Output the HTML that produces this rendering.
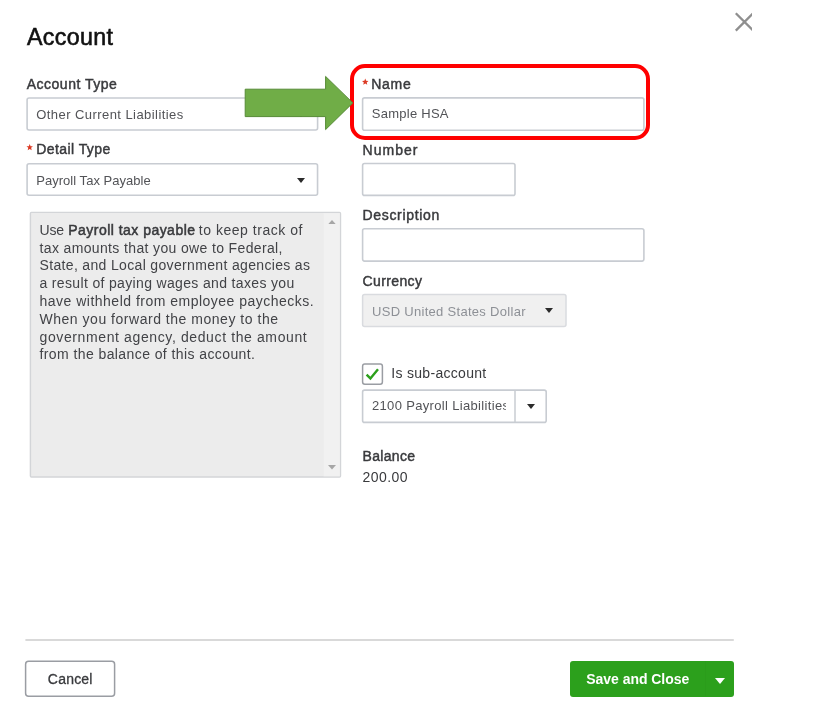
<!DOCTYPE html>
<html><head><meta charset="utf-8"><title>Account</title>
<style>
html,body{margin:0;padding:0;background:#fff;}
body{width:827px;height:727px;position:relative;overflow:hidden;font-family:"Liberation Sans",sans-serif;}
.t{position:absolute;white-space:nowrap;line-height:1;font-family:"Liberation Sans",sans-serif;}
.t b{font-weight:700;}
.abs{position:absolute;}
body{filter:opacity(1);}
</style></head>
<body>

<svg class="abs" style="left:0;top:0" width="827" height="727" viewBox="0 0 827 727">
<rect x="27.1" y="98.0" width="290.50" height="32.00" rx="2" fill="#fff" stroke="#c8ccd2" stroke-width="1.6"/>
<rect x="27.1" y="163.7" width="290.45" height="31.55" rx="2" fill="#fff" stroke="#c8ccd2" stroke-width="1.6"/>
<rect x="30.4" y="212.4" width="310.10" height="264.60" rx="1" fill="#ececec" stroke="#d3d5d8" stroke-width="1.4"/>
<rect x="323.6" y="213.1" width="16.2" height="263.2" fill="#f1f1f1"/>
<rect x="362.6" y="97.9" width="281.30" height="32.40" rx="2" fill="#fff" stroke="#c8ccd2" stroke-width="1.6"/>
<rect x="362.6" y="163.5" width="152.40" height="31.90" rx="2" fill="#fff" stroke="#c8ccd2" stroke-width="1.6"/>
<rect x="362.6" y="228.7" width="281.30" height="32.40" rx="2" fill="#fff" stroke="#c8ccd2" stroke-width="1.6"/>
<rect x="362.6" y="294.5" width="203.40" height="32.00" rx="2" fill="#f0f0f0" stroke="#d9dbdf" stroke-width="1.5"/>
<rect x="362.6" y="364.0" width="19.80" height="20.20" rx="2.2" fill="#fff" stroke="#9a9da3" stroke-width="1.5"/>
<rect x="362.6" y="390.1" width="183.60" height="32.30" rx="2" fill="#fff" stroke="#c8ccd2" stroke-width="1.6"/>
<line x1="515" y1="390.1" x2="515" y2="422.4" stroke="#c8ccd2" stroke-width="1.5"/>
<rect x="25.6" y="661.3" width="89.00" height="34.90" rx="3" fill="#fff" stroke="#9a9da3" stroke-width="1.5"/>
</svg>
<!-- inputs left -->
<svg class="abs" style="left:297px;top:111.7px" width="8" height="5" viewBox="0 0 8 5"><path d="M0 0 H8 L4 5 Z" fill="#2b2b2b"/></svg>
<!-- detail dropdown arrow -->
<svg class="abs" style="left:297px;top:177.5px" width="8" height="5" viewBox="0 0 8 5"><path d="M0 0 H8 L4 5 Z" fill="#2b2b2b"/></svg>
<!-- gray description box -->
<svg class="abs" style="left:327.7px;top:219.8px" width="8" height="4.4" viewBox="0 0 8 4.4"><path d="M0 4.4 L4 0 L8 4.4 Z" fill="#a6a6a6"/></svg>
<svg class="abs" style="left:327.7px;top:465.2px" width="8" height="4.4" viewBox="0 0 8 4.4"><path d="M0 0 H8 L4 4.4 Z" fill="#a6a6a6"/></svg>
<!-- right inputs -->
<svg class="abs" style="left:544.5px;top:308.4px" width="8" height="5" viewBox="0 0 8 5"><path d="M0 0 H8 L4 5 Z" fill="#2b2b2b"/></svg>
<!-- checkbox -->
<svg class="abs" style="left:365px;top:367px" width="15" height="14" viewBox="0 0 15 14"><path d="M1.6 7.6 L5.4 11.4 L13 2.2" fill="none" stroke="#2ca01c" stroke-width="2.4" stroke-linecap="butt" stroke-linejoin="miter"/></svg>
<!-- sub-account combo -->
<svg class="abs" style="left:527px;top:404px" width="8" height="5" viewBox="0 0 8 5"><path d="M0 0 H8 L4 5 Z" fill="#2b2b2b"/></svg>
<!-- clipped combo text -->
<div class="abs" style="left:366px;top:395px;width:140.25px;height:24px;overflow:hidden;"><span class="t" style="left:6px;top:3.8px;font-size:13px;color:#525357;letter-spacing:0.33px;">2100 Payroll Liabilities</span></div>
<!-- red stars -->
<svg class="abs" style="left:0;top:0" width="827" height="200" viewBox="0 0 827 200"><polygon points="29.70,144.00 30.58,146.19 32.93,146.35 31.13,147.86 31.70,150.15 29.70,148.90 27.70,150.15 28.27,147.86 26.47,146.35 28.82,146.19" fill="#dc3a24"/><polygon points="365.25,78.60 366.13,80.79 368.48,80.95 366.68,82.46 367.25,84.75 365.25,83.50 363.25,84.75 363.82,82.46 362.02,80.95 364.37,80.79" fill="#dc3a24"/></svg>
<!-- close X -->
<div class="abs" style="left:730px;top:8px;width:22px;height:28px;overflow:hidden;"><svg class="abs" style="left:0;top:0" width="30" height="28" viewBox="0 0 30 28"><path d="M5.8 5.2 L23.2 22.6 M23.2 5.2 L5.8 22.6" stroke="#8f8f8f" stroke-width="2.3" fill="none"/></svg></div>
<!-- red rounded rect -->
<div class="abs" style="left:350px;top:63.75px;width:300px;height:75.75px;box-sizing:border-box;border:4px solid #ff0000;border-radius:15px;"></div>
<!-- green arrow -->
<svg class="abs" style="left:240px;top:70px" width="120" height="66" viewBox="240 70 120 66"><path d="M245.2 89.2 H325.6 V76.4 L352.8 102.9 L325.6 129.6 V116.6 H245.2 Z" fill="#70ad47" stroke="#568a36" stroke-width="1" stroke-linejoin="miter"/></svg>
<!-- footer -->
<svg class="abs" style="left:0;top:636px" width="827" height="8" viewBox="0 636 827 8"><line x1="25.4" y1="640" x2="733.8" y2="640" stroke="#cdcdcd" stroke-width="1.3"/></svg>
<div class="abs" style="left:569.5px;top:660.75px;width:164.5px;height:35.75px;background:#2ca01c;border-radius:3px;"></div>
<div class="abs" style="left:704.75px;top:660.75px;width:1px;height:35.5px;background:#2b9c1b;"></div>
<svg class="abs" style="left:714.5px;top:678px" width="10" height="6" viewBox="0 0 10 6"><path d="M0 0 H10 L5 6 Z" fill="#ffffff"/></svg>

<span class="t" style="left:26.9px;top:26.16px;font-size:23.2px;font-weight:400;color:#111111;letter-spacing:0.367px;-webkit-text-stroke:0.6px #111111;">Account</span>
<span class="t" style="left:26.75px;top:77.15px;font-size:14px;font-weight:400;color:#393a3d;letter-spacing:0.493px;-webkit-text-stroke:0.45px #393a3d;">Account Type</span>
<span class="t" style="left:36.25px;top:108.00px;font-size:13px;font-weight:400;color:#525357;letter-spacing:0.435px;">Other Current Liabilities</span>
<span class="t" style="left:36.25px;top:142.25px;font-size:14px;font-weight:400;color:#393a3d;letter-spacing:0.422px;-webkit-text-stroke:0.45px #393a3d;">Detail Type</span>
<span class="t" style="left:36.25px;top:173.50px;font-size:13px;font-weight:400;color:#525357;letter-spacing:0.031px;">Payroll Tax Payable</span>
<span class="t" style="left:371.3px;top:76.75px;font-size:14px;font-weight:400;color:#393a3d;letter-spacing:0.714px;-webkit-text-stroke:0.45px #393a3d;">Name</span>
<span class="t" style="left:371.75px;top:107.25px;font-size:13px;font-weight:400;color:#525357;letter-spacing:0.259px;">Sample HSA</span>
<span class="t" style="left:362.5px;top:142.65px;font-size:14px;font-weight:400;color:#393a3d;letter-spacing:1.041px;-webkit-text-stroke:0.45px #393a3d;">Number</span>
<span class="t" style="left:362.5px;top:207.90px;font-size:14px;font-weight:400;color:#393a3d;letter-spacing:0.672px;-webkit-text-stroke:0.45px #393a3d;">Description</span>
<span class="t" style="left:362.5px;top:273.90px;font-size:14px;font-weight:400;color:#393a3d;letter-spacing:0.386px;-webkit-text-stroke:0.45px #393a3d;">Currency</span>
<span class="t" style="left:372px;top:305.00px;font-size:13px;font-weight:400;color:#8d9096;letter-spacing:0.297px;">USD United States Dollar</span>
<span class="t" style="left:391.25px;top:366.05px;font-size:14px;font-weight:400;color:#393a3d;letter-spacing:0.303px;">Is sub-account</span>
<span class="t" style="left:362.5px;top:448.55px;font-size:14px;font-weight:400;color:#393a3d;letter-spacing:0.318px;-webkit-text-stroke:0.45px #393a3d;">Balance</span>
<span class="t" style="left:362.5px;top:470.15px;font-size:14px;font-weight:400;color:#393a3d;letter-spacing:0.434px;">200.00</span>
<span class="t" style="left:47.8px;top:671.95px;font-size:14px;font-weight:400;color:#393a3d;letter-spacing:0.221px;-webkit-text-stroke:0.3px #393a3d;">Cancel</span>
<span class="t" style="left:586.25px;top:672.40px;font-size:14px;font-weight:700;color:#ffffff;letter-spacing:-0.038px;">Save and Close</span>
<span class="t" style="left:39.5px;top:240.64px;font-size:14px;font-weight:400;color:#424347;letter-spacing:0.361px;">tax amounts that you owe to Federal,</span>
<span class="t" style="left:39.5px;top:258.43px;font-size:14px;font-weight:400;color:#424347;letter-spacing:0.339px;">State, and Local government agencies as</span>
<span class="t" style="left:39.5px;top:276.22px;font-size:14px;font-weight:400;color:#424347;letter-spacing:0.343px;">a result of paying wages and taxes you</span>
<span class="t" style="left:39.5px;top:294.01px;font-size:14px;font-weight:400;color:#424347;letter-spacing:0.492px;">have withheld from employee paychecks.</span>
<span class="t" style="left:39.5px;top:311.80px;font-size:14px;font-weight:400;color:#424347;letter-spacing:0.522px;">When you forward the money to the</span>
<span class="t" style="left:39.5px;top:329.59px;font-size:14px;font-weight:400;color:#424347;letter-spacing:0.616px;">government agency, deduct the amount</span>
<span class="t" style="left:39.5px;top:347.38px;font-size:14px;font-weight:400;color:#424347;letter-spacing:0.411px;">from the balance of this account.</span>
<span class="t" style="left:39.5px;top:222.85px;font-size:14px;font-weight:400;color:#424347;letter-spacing:-0.203px;">Use</span>
<span class="t" style="left:68.25px;top:222.85px;font-size:14px;font-weight:400;color:#393a3d;letter-spacing:0.470px;-webkit-text-stroke:0.5px #393a3d;">Payroll tax payable</span>
<span class="t" style="left:198.75px;top:222.85px;font-size:14px;font-weight:400;color:#424347;letter-spacing:0.535px;">to keep track of</span>
</body></html>
